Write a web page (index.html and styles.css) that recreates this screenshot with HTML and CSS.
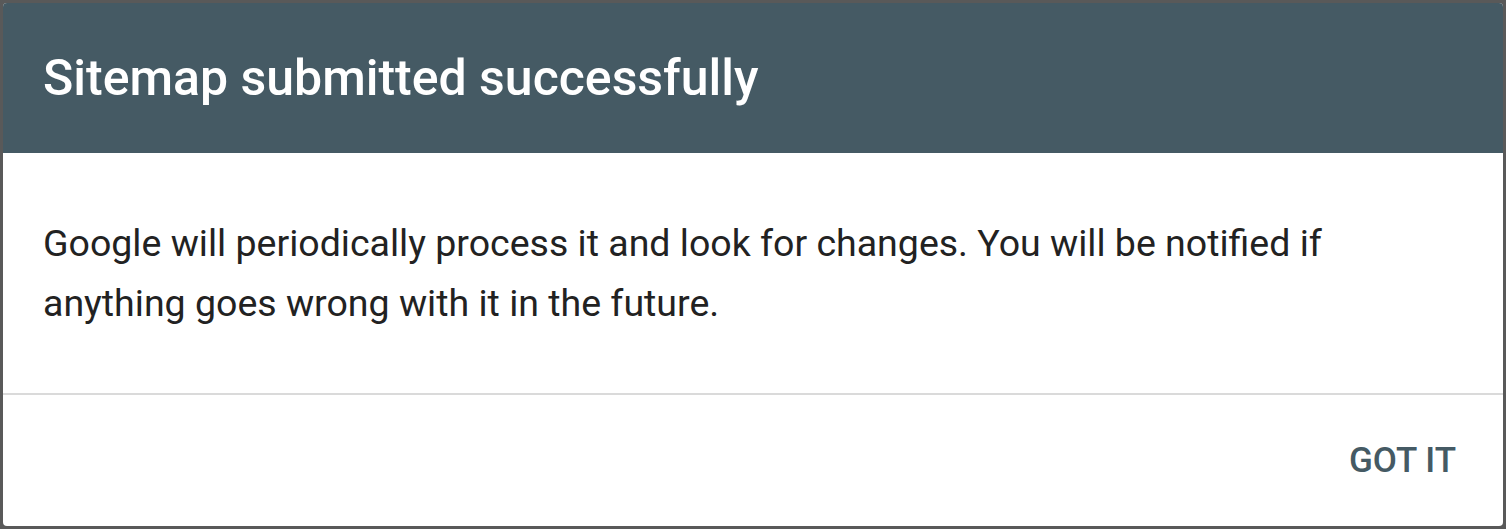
FILE: index.html
```html
<!DOCTYPE html>
<html lang="en">
<head>
    <meta charset="UTF-8">
    <meta name="viewport" content="width=device-width, initial-scale=1.0">
    <title>Sitemap submitted</title>
    <link rel="stylesheet" href="styles.css">
</head>
<body>
    <div class="dialog">
        <div class="dialog-header">
            <h1>Sitemap submitted successfully</h1>
        </div>
        <div class="dialog-content">
            <p>Google will periodically process it and look for changes. You will be notified if anything goes wrong with it in the future.</p>
        </div>
        <div class="dialog-actions">
            <button type="button">GOT IT</button>
        </div>
    </div>
</body>
</html>
```

FILE: styles.css
```css
html, body {
    height: 100%;
}

body {
    font-family: Roboto, "Liberation Sans", sans-serif;
    background-color: #595959;
    margin: 0;
    padding: 3px;
    box-sizing: border-box;
    display: flex;
}

.dialog {
    flex: 1;
    display: flex;
    flex-direction: column;
    background: #ffffff;
    border-radius: 4px;
    overflow: hidden;
}

.dialog-header {
    background-color: #455a64;
    height: 150px;
    padding: 0 40px;
    display: flex;
    align-items: center;
}

.dialog-header h1 {
    margin: 0;
    color: #ffffff;
    font-size: 50px;
    font-weight: 500;
}

.dialog-content {
    height: 240px;
    padding: 0 40px;
    border-bottom: 2px solid #dadada;
    display: flex;
    align-items: center;
}

.dialog-content p {
    margin: 0;
    color: #222222;
    font-size: 37.5px;
    line-height: 60px;
    max-width: 1360px;
}

.dialog-actions {
    flex: 1;
    display: flex;
    justify-content: flex-end;
    align-items: center;
    padding: 0 47px;
}

.dialog-actions button {
    background: none;
    border: none;
    padding: 0;
    font-family: inherit;
    font-size: 35px;
    font-weight: 500;
    color: #455a64;
    cursor: pointer;
}
```
